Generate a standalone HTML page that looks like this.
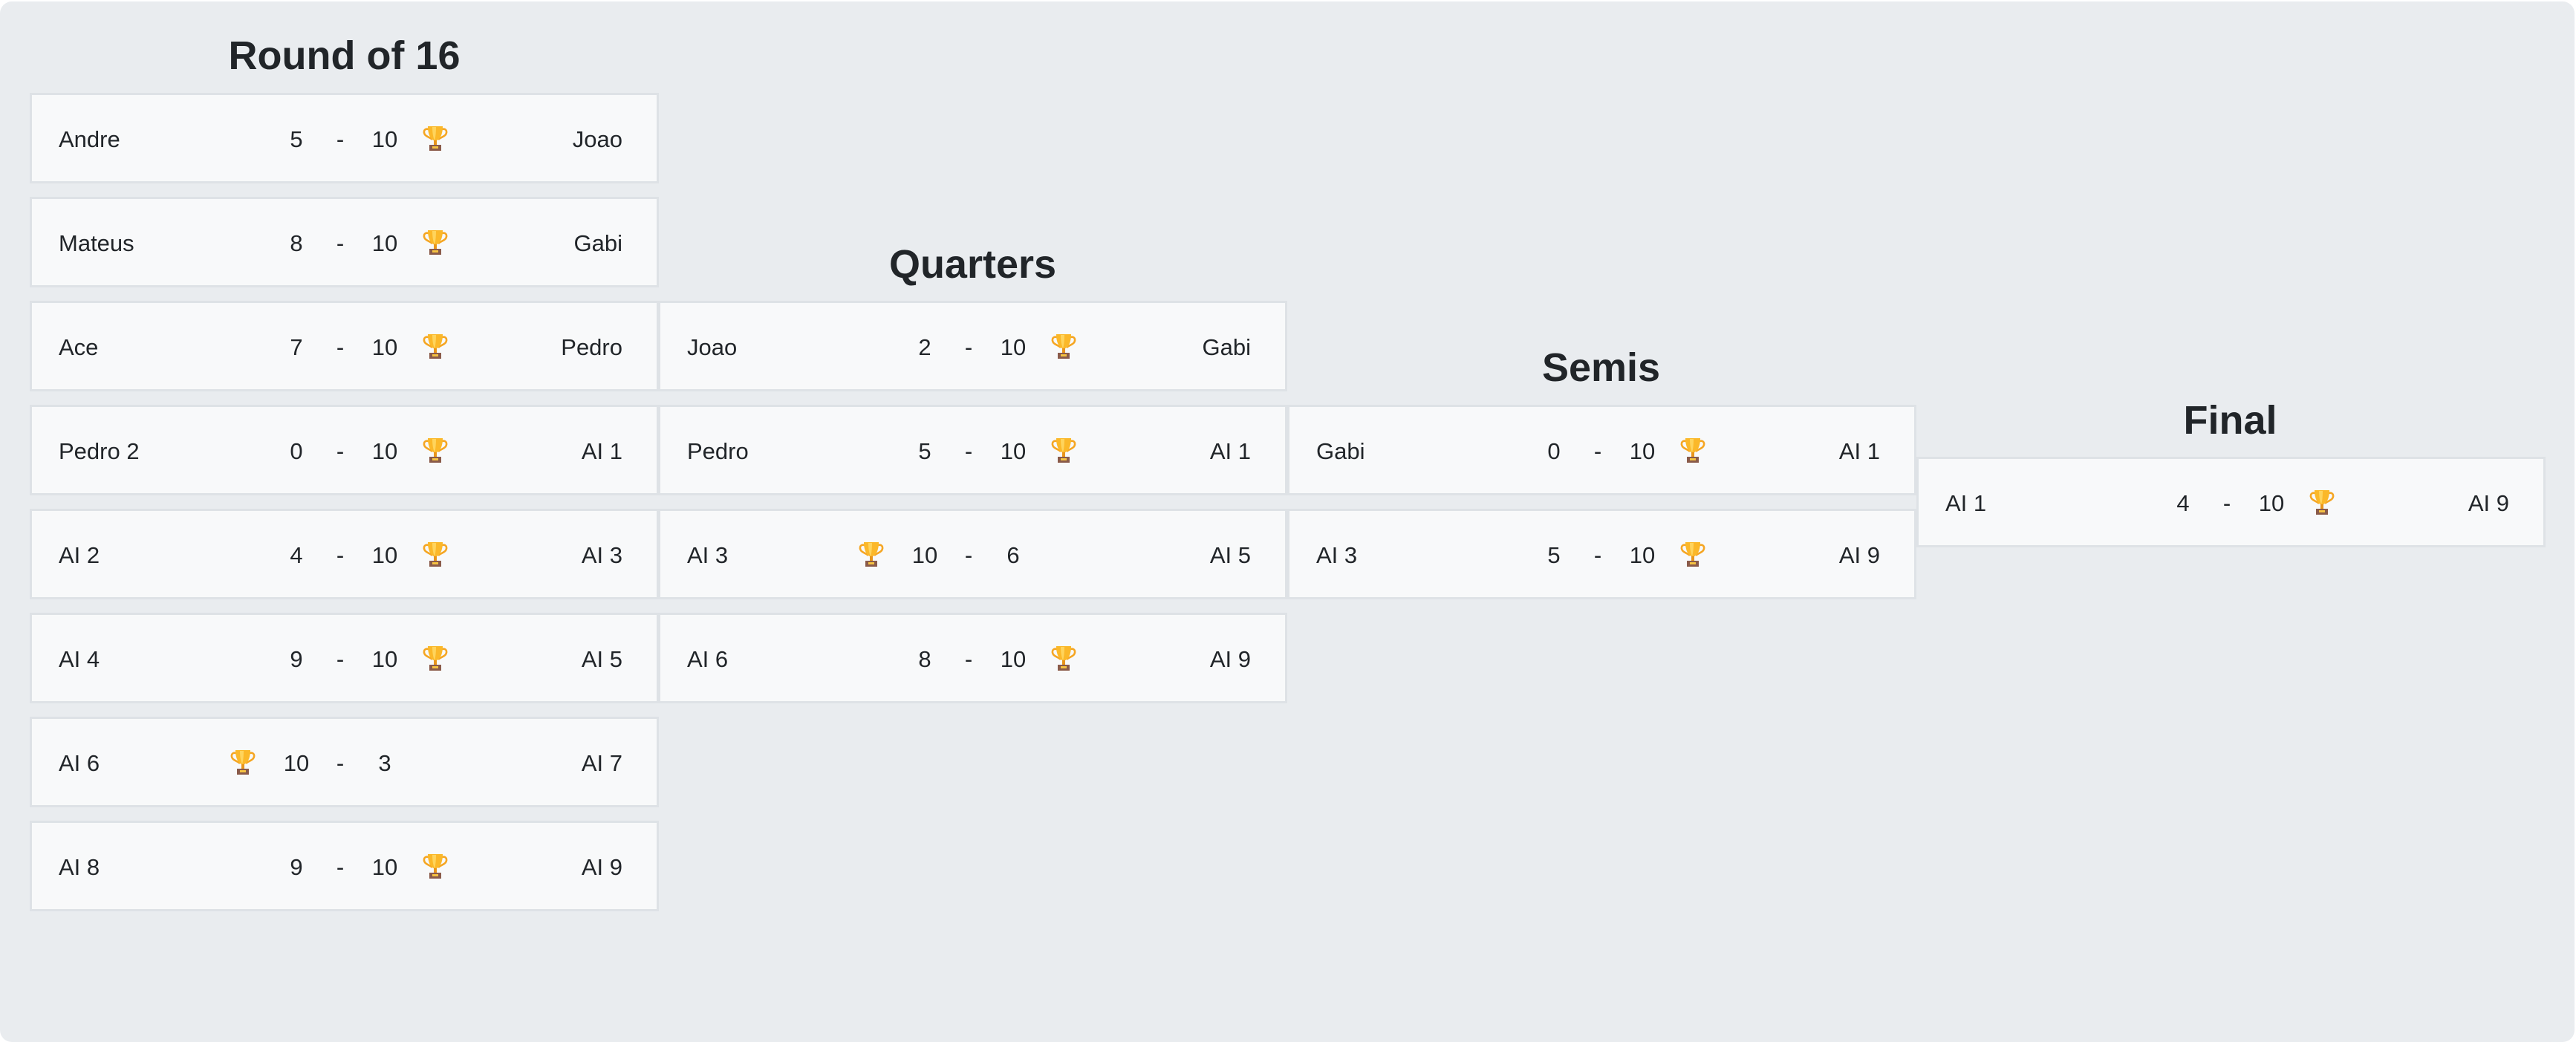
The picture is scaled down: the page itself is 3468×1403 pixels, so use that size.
<!DOCTYPE html>
<html><head><meta charset="utf-8"><style>
*{margin:0;padding:0;box-sizing:border-box}
body{width:3468px;height:1403px;background:#fff;font-family:"Liberation Sans",sans-serif;color:#212529;position:relative;overflow:hidden}
.bg{position:absolute;left:0;top:2px;width:3466px;height:1401px;background:#e9ecef;border-radius:16px}
.t{position:absolute;width:845px;text-align:center;font-size:54px;font-weight:bold;line-height:60px}
.c{position:absolute;width:847px;height:122px;background:#f8f9fa;border:3px solid #dee2e6;font-size:31px}
.c span{position:absolute;top:42px;line-height:36px;white-space:nowrap}
.n1{left:36px}
.n2{right:46px}
.s1,.s2,.d{width:60px;text-align:center}
.s1{left:326px}.d{left:385px}.s2{left:445px}
.c svg{position:absolute;top:40px;width:36px;height:36px}
.w1{left:266px}.w2{left:525px}
</style></head><body>
<div class="bg"></div>
<svg width="0" height="0" style="position:absolute"><defs><symbol id="tr" viewBox="0 0 36 36">
<path d="M9 6 C2 4 1 12 6 15 C9 17 12 18 14 20" fill="none" stroke="#f5a623" stroke-width="2.6"/>
<path d="M27 6 C34 4 35 12 30 15 C27 17 24 18 22 20" fill="none" stroke="#f5a623" stroke-width="2.6"/>
<path d="M8 2 H28 C28 14 24 20 18 22 C12 20 8 14 8 2Z" fill="#fbb829"/>
<path d="M14 3 H19 C19 12 18 18 17 21 C15 17 14 10 14 3Z" fill="#ffd45c"/>
<rect x="16" y="21" width="4" height="6" fill="#e8951c"/>
<rect x="10" y="27" width="16" height="8" fill="#8a5b4a"/>
<rect x="14" y="29" width="8" height="3" fill="#f5c242"/>
</symbol></defs></svg>

<div class="t" style="left:41px;top:45px">Round of 16</div>
<div class="t" style="left:887px;top:326px">Quarters</div>
<div class="t" style="left:1733px;top:465px">Semis</div>
<div class="t" style="left:2580px;top:536px">Final</div>

<div class="c" style="left:40px;top:125px"><span class="n1">Andre</span><span class="s1">5</span><span class="d">-</span><span class="s2">10</span><svg class="w2"><use href="#tr"/></svg><span class="n2">Joao</span></div>
<div class="c" style="left:40px;top:265px"><span class="n1">Mateus</span><span class="s1">8</span><span class="d">-</span><span class="s2">10</span><svg class="w2"><use href="#tr"/></svg><span class="n2">Gabi</span></div>
<div class="c" style="left:40px;top:405px"><span class="n1">Ace</span><span class="s1">7</span><span class="d">-</span><span class="s2">10</span><svg class="w2"><use href="#tr"/></svg><span class="n2">Pedro</span></div>
<div class="c" style="left:40px;top:545px"><span class="n1">Pedro 2</span><span class="s1">0</span><span class="d">-</span><span class="s2">10</span><svg class="w2"><use href="#tr"/></svg><span class="n2">AI 1</span></div>
<div class="c" style="left:40px;top:685px"><span class="n1">AI 2</span><span class="s1">4</span><span class="d">-</span><span class="s2">10</span><svg class="w2"><use href="#tr"/></svg><span class="n2">AI 3</span></div>
<div class="c" style="left:40px;top:825px"><span class="n1">AI 4</span><span class="s1">9</span><span class="d">-</span><span class="s2">10</span><svg class="w2"><use href="#tr"/></svg><span class="n2">AI 5</span></div>
<div class="c" style="left:40px;top:965px"><span class="n1">AI 6</span><svg class="w1"><use href="#tr"/></svg><span class="s1">10</span><span class="d">-</span><span class="s2">3</span><span class="n2">AI 7</span></div>
<div class="c" style="left:40px;top:1105px"><span class="n1">AI 8</span><span class="s1">9</span><span class="d">-</span><span class="s2">10</span><svg class="w2"><use href="#tr"/></svg><span class="n2">AI 9</span></div>

<div class="c" style="left:886px;top:405px"><span class="n1">Joao</span><span class="s1">2</span><span class="d">-</span><span class="s2">10</span><svg class="w2"><use href="#tr"/></svg><span class="n2">Gabi</span></div>
<div class="c" style="left:886px;top:545px"><span class="n1">Pedro</span><span class="s1">5</span><span class="d">-</span><span class="s2">10</span><svg class="w2"><use href="#tr"/></svg><span class="n2">AI 1</span></div>
<div class="c" style="left:886px;top:685px"><span class="n1">AI 3</span><svg class="w1"><use href="#tr"/></svg><span class="s1">10</span><span class="d">-</span><span class="s2">6</span><span class="n2">AI 5</span></div>
<div class="c" style="left:886px;top:825px"><span class="n1">AI 6</span><span class="s1">8</span><span class="d">-</span><span class="s2">10</span><svg class="w2"><use href="#tr"/></svg><span class="n2">AI 9</span></div>

<div class="c" style="left:1733px;top:545px"><span class="n1">Gabi</span><span class="s1">0</span><span class="d">-</span><span class="s2">10</span><svg class="w2"><use href="#tr"/></svg><span class="n2">AI 1</span></div>
<div class="c" style="left:1733px;top:685px"><span class="n1">AI 3</span><span class="s1">5</span><span class="d">-</span><span class="s2">10</span><svg class="w2"><use href="#tr"/></svg><span class="n2">AI 9</span></div>

<div class="c" style="left:2580px;top:615px"><span class="n1">AI 1</span><span class="s1">4</span><span class="d">-</span><span class="s2">10</span><svg class="w2"><use href="#tr"/></svg><span class="n2">AI 9</span></div>
</body></html>
